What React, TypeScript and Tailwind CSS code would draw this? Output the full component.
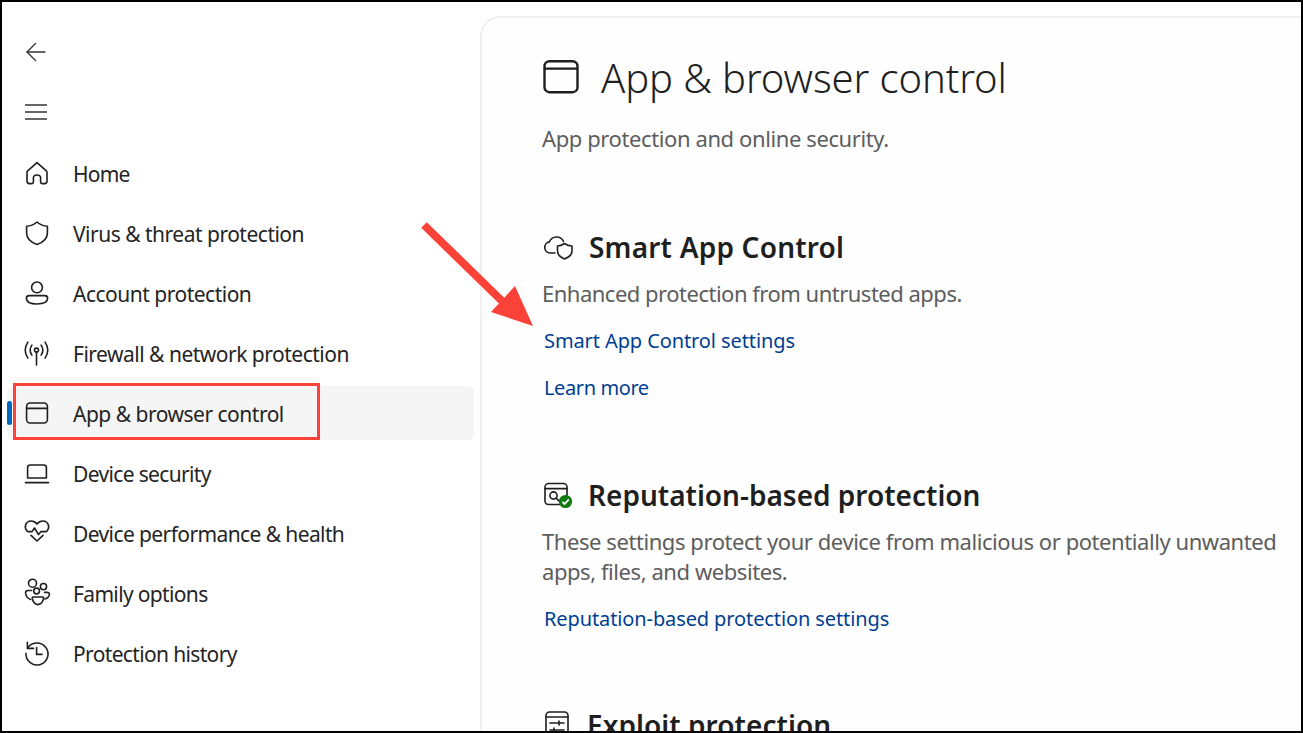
import React from "react";

const S = { fill: "none", stroke: "#1f1f1f", strokeWidth: 1.6, strokeLinecap: "round" as const, strokeLinejoin: "round" as const };

const Ico = ({ children, w = 26 }: { children: React.ReactNode; w?: number }) => (
  <svg width={w} height={w} viewBox="0 0 26 26" className="shrink-0 overflow-visible" {...S}>{children}</svg>
);

const icons: Record<string, React.ReactNode> = {
  home: <Ico><path d="M13 2.6 L22.6 11.2 Q23 11.6 23 12.4 V21 Q23 23.6 20.6 23.6 H18 Q16.6 23.6 16.6 22 V18 Q16.6 15 13 15 Q9.4 15 9.4 18 V22 Q9.4 23.6 8 23.6 H5.4 Q3 23.6 3 21 V12.4 Q3 11.6 3.4 11.2 Z" /></Ico>,
  shield: <Ico><path d="M13 2 Q18 6.2 23.4 6.2 V13 Q23.4 21 13 24.4 Q2.6 21 2.6 13 V6.2 Q8 6.2 13 2 Z" /></Ico>,
  account: <Ico><circle cx="13" cy="7.4" r="5.4" /><path d="M5.4 15.6 H20.6 Q23.6 15.6 23.6 18 Q23.6 24 13 24 Q2.4 24 2.4 18 Q2.4 15.6 5.4 15.6 Z" /></Ico>,
  firewall: <Ico><g transform="translate(-0.5 -0.5)"><circle cx="13" cy="10.6" r="2" /><path d="M13 12.6 V25.4" /><path d="M8.4 5.6 Q4.8 10.6 8.4 15.6" /><path d="M17.6 5.6 Q21.2 10.6 17.6 15.6" /><path d="M4.4 2.6 Q-1 10.6 4.4 18.6" /><path d="M21.6 2.6 Q27 10.6 21.6 18.6" /></g></Ico>,
  app: <Ico><rect x="2.6" y="3" width="20.8" height="20" rx="3.4" /><path d="M2.6 8.4 H23.4" /></Ico>,
  device: <Ico><path d="M3.6 18 V7.6 Q3.6 5 6.2 5 H19.8 Q22.4 5 22.4 7.6 V18 Z" /><path d="M1.4 22.6 H24.6" /></Ico>,
  health: <Ico><path d="M3 11 Q0.6 8 1.6 5 Q3 1 7 1 Q10.6 1 13 4 Q15.4 1 19 1 Q23 1 24.4 5 Q25.4 8 23 11" /><path d="M3.6 11.6 H8 L10.5 8 L14.5 14.6 L17 11.6 H22.4" /><path d="M7 15.4 L13 21 L19 15.4" /></Ico>,
  family: <Ico><circle cx="8.5" cy="3.2" r="4" /><circle cx="19.5" cy="6.6" r="3.1" /><circle cx="12.6" cy="11" r="2.9" /><path d="M7.6 10.5 H4 Q1.4 10.5 1.6 13 Q2.2 18 6.6 19.4" /><path d="M20.6 12.4 H23 Q25.6 12.4 25.4 14.6 Q25 17.6 21 19" /><path d="M9 17 H19 Q19.8 17 19.5 18.4 Q18.6 24 14 24.6 Q9 24 8.3 18.4 Q8.2 17 9 17 Z" /></Ico>,
  history: <Ico><path d="M3.4 2.2 V8.4 H9.6" /><path d="M3.6 8.2 A11 11 0 1 1 2 13.4" /><path d="M12.6 7.6 V14.4 H18" /></Ico>,
};

const rows = [
  ["home", "Home"],
  ["shield", "Virus & threat protection"],
  ["account", "Account protection"],
  ["firewall", "Firewall & network protection"],
  ["app", "App & browser control"],
  ["device", "Device security"],
  ["health", "Device performance & health"],
  ["family", "Family options"],
  ["history", "Protection history"],
];

export default function App() {
  return (
    <div className="relative w-[1303px] h-[733px] overflow-hidden bg-white border-2 border-black flex text-[#1f1f1f] font-['Noto_Sans','Liberation_Sans',sans-serif]">
      <aside className="w-[478px] shrink-0 pt-5">
        <div className="h-[60px] flex items-center pl-[23px]">
          <svg width="22" height="22" viewBox="0 0 22 22" fill="none" stroke="#333" strokeWidth="1.4" strokeLinecap="round" strokeLinejoin="round"><path d="M2 11 H20" /><path d="M10.5 2.5 L2 11 L10.5 19.5" /></svg>
        </div>
        <div className="h-[60px] flex items-center pl-[22px]">
          <svg width="24" height="18" viewBox="0 0 24 18" fill="none" stroke="#333" strokeWidth="1.5"><path d="M1 2 H23" /><path d="M1 9 H23" /><path d="M1 16 H23" /></svg>
        </div>
        {rows.map(([k, label]) => {
          const active = k === "app";
          return (
            <div key={k} className="h-[60px] flex items-center">
              <div className={`relative ml-[5px] mt-[2px] w-[467px] h-[54px] rounded-md flex items-center pl-[17px] gap-[23px] ${active ? "bg-[#f5f5f5]" : ""}`}>
                {active && <div className="absolute left-0 top-[15px] w-[5px] h-[24px] rounded-full bg-[#0067c0]" />}
                {icons[k]}
                <span className={`pt-[4px] text-[21px] text-[#242424] whitespace-nowrap ${k === "health" ? "tracking-[-0.6px]" : k === "family" || k === "history" || k === "device" ? "tracking-[-0.65px]" : k === "home" ? "tracking-[-0.8px]" : "tracking-[-0.5px]"}`}>{label}</span>
              </div>
            </div>
          );
        })}
      </aside>

      <main className="flex-1 mt-[14px] h-[760px] rounded-tl-[20px] border-2 border-[#f0f0f0] border-r-0 bg-[#fefefe] pl-[60px] pt-[40px]">
        <div className="flex items-center h-[40px] gap-[22px]">
          <svg width="36" height="36" viewBox="0 0 36 36" fill="none" stroke="#1f1f1f" strokeWidth="2.4" className="ml-[1px]"><rect x="1.5" y="1.2" width="33" height="31" rx="5" /><path d="M1.5 8.6 H34.5" /></svg>
          <h1 className="text-[40px] font-light leading-none tracking-[-0.1px] whitespace-nowrap">App &amp; browser control</h1>
        </div>
        <p className="mt-[25px] text-[22px] leading-[30px] tracking-[-0.4px] text-[#5d5d5d]">App protection and online security.</p>

        <div className="mt-[74px] flex items-center h-[40px] gap-[14px]">
          <svg width="32" height="26" viewBox="0 0 32 26" {...S} className="shrink-0 ml-[1px]"><path d="M12 19 H7 A5.6 5.6 0 0 1 6.4 7.9 A7.6 7.6 0 0 1 20.5 7.5" /><path d="M21.5 9.5 Q25 12 29 12 V17 Q29 22 21.5 25 Q14.5 22 14.5 17 V12 Q18 12 21.5 9.5 Z" /></svg>
          <h2 className="text-[28px] font-semibold leading-none tracking-[0.2px] whitespace-nowrap">Smart App Control</h2>
        </div>
        <p className="mt-[11px] text-[22px] leading-[30px] tracking-[-0.5px] text-[#5d5d5d]">Enhanced protection from untrusted apps.</p>
        <div className="mt-[9px]">
          <div className="h-[47px] flex items-center pl-[2px] text-[20px] tracking-[-0.1px] text-[#003e92] leading-none">Smart App Control settings</div>
          <div className="h-[47px] flex items-center pl-[2px] text-[20px] tracking-[-0.4px] text-[#003e92] leading-none">Learn more</div>
        </div>

        <div className="mt-[64px] flex items-center h-[40px] gap-[15px]">
          <div className="relative w-[29px] h-[27px] shrink-0 ml-[2px]">
            <svg width="29" height="27" viewBox="0 0 29 27" {...S}><rect x="1" y="1.5" width="22" height="21" rx="3.5" /><path d="M1 6.6 H23" /><circle cx="9.5" cy="13.5" r="3.6" /><path d="M12.4 16.4 L16 20" /></svg>
            <svg width="15" height="15" viewBox="0 0 15 15" className="absolute right-0 bottom-0"><circle cx="7.5" cy="7.5" r="6.6" fill="#0f7b0f" /><path d="M4.4 7.8 L6.6 10 L10.8 5.4" fill="none" stroke="#fff" strokeWidth="1.8" /></svg>
          </div>
          <h2 className="text-[28px] font-semibold leading-none tracking-[0px] whitespace-nowrap">Reputation-based protection</h2>
        </div>
        <p className="mt-[11px] w-[745px] text-[22px] leading-[30px] tracking-[-0.43px] text-[#5d5d5d]">These settings protect your device from malicious or potentially unwanted apps, files, and websites.</p>
        <div className="mt-[9px]">
          <div className="h-[47px] flex items-center pl-[2px] text-[20px] tracking-[-0.11px] text-[#003e92] leading-none">Reputation-based protection settings</div>
        </div>

        <div className="mt-[63px] flex items-center h-[40px] gap-[16px]">
          <svg width="27" height="30" viewBox="0 0 27 30" {...S} className="shrink-0 ml-[2px]"><rect x="2" y="2" width="22" height="26" rx="3.5" /><path d="M2 7 H24" /><path d="M6 13 H20" /><path d="M6 20 H20" /><path d="M15 11 V15" /><path d="M10 18 V22" /></svg>
          <h2 className="text-[28px] font-semibold leading-none tracking-[0.05px] whitespace-nowrap">Exploit protection</h2>
        </div>
      </main>

      <div className="absolute left-[11px] top-[381px] w-[307px] h-[57px] border-[3px] border-[#fb4238]" />
      <svg className="absolute left-[418px] top-[220px]" width="116" height="108" viewBox="0 0 116 108">
        <path d="M4 3 L83 80" stroke="#fb4238" strokeWidth="8" fill="none" />
        <path d="M113 104 L71 90 L95 64 Z" fill="#fb4238" />
      </svg>
    </div>
  );
}
